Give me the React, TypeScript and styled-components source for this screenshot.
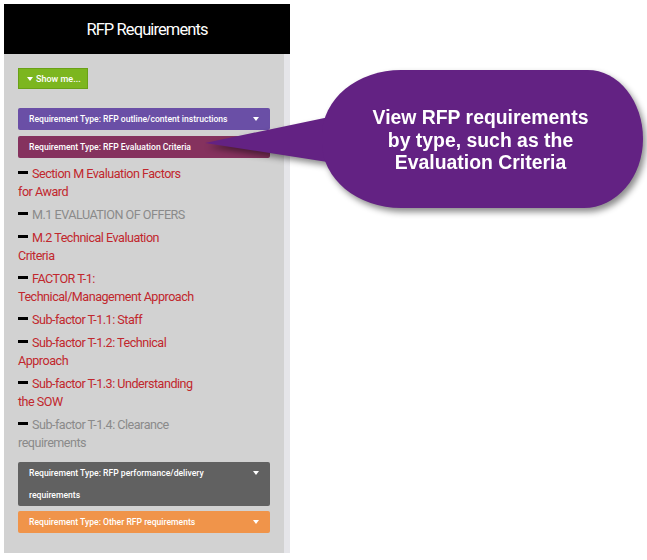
import React from "react";
import styled, { createGlobalStyle } from "styled-components";

const Global = createGlobalStyle`
  html, body { margin: 0; padding: 0; background: #ffffff; }
  body { font-family: Roboto, "Liberation Sans", sans-serif; }
`;

const Page = styled.div`
  position: relative;
  width: 647px;
  height: 560px;
  padding: 4px 0 0 4px;
  box-sizing: border-box;
  overflow: hidden;
`;

const Panel = styled.div`
  width: 286px;
  height: 549px;
  display: flex;
  flex-direction: column;
`;

const Header = styled.div`
  height: 50px;
  background: #000000;
  color: #ffffff;
  display: flex;
  align-items: center;
  justify-content: center;
  font-family: Roboto, sans-serif;
  font-size: 16.5px;
  letter-spacing: -0.9px;
`;

const Body = styled.div`
  flex: 1;
  display: flex;
`;

const Content = styled.div`
  flex: 1;
  background: #d2d2d2;
  padding: 14px 14px 0 14px;
  display: flex;
  flex-direction: column;
  align-items: flex-start;
`;

const Strip = styled.div`
  width: 6px;
  background: #e5e5e9;
`;

const ShowButton = styled.div`
  box-sizing: border-box;
  width: 70px;
  height: 21px;
  background: #7cb61f;
  border: 1px solid #6aa117;
  color: #ffffff;
  font-size: 9px;
  font-weight: 500;
  display: flex;
  align-items: center;
  padding-left: 8px;
  gap: 3px;
  margin-bottom: 19px;
`;

const Caret = styled.span`
  display: inline-block;
  width: 0;
  height: 0;
  border-left: 3px solid transparent;
  border-right: 3px solid transparent;
  border-top: 4px solid #ffffff;
`;

const TypeBar = styled.div<{ $bg: string; $gap?: number }>`
  box-sizing: border-box;
  width: 252px;
  background: ${(p) => p.$bg};
  border-radius: 2px;
  color: #ffffff;
  font-size: 8.6px;
  font-weight: 500;
  line-height: 22px;
  display: flex;
  align-items: flex-start;
  justify-content: space-between;
  padding: 0 11px 0 11px;
  margin-top: ${(p) => p.$gap ?? 0}px;
`;

const BarText = styled.span`
  max-width: 200px;
`;

const BarCaret = styled(Caret)`
  margin-top: 9px;
  flex: none;
`;

const Items = styled.div`
  display: flex;
  flex-direction: column;
  gap: 5px;
  margin: 7px 0 10px 0;
  width: 177px;
`;

const Item = styled.div<{ $muted?: boolean }>`
  font-size: 12.6px;
  line-height: 18px;
  letter-spacing: -0.5px;
  color: ${(p) => (p.$muted ? "#8a8a8a" : "#c1272d")};
`;

const Dash = styled.span`
  display: inline-block;
  width: 10px;
  height: 3px;
  background: #000000;
  vertical-align: 4px;
  margin-right: 4px;
`;

const Callout = styled.div`
  position: absolute;
  left: 204px;
  top: 70px;
  width: 440px;
  height: 140px;
  filter: drop-shadow(3px 4px 3px rgba(0, 0, 0, 0.45));
`;

const Tail = styled.svg`
  position: absolute;
  left: 0;
  top: 0;
`;

const Bubble = styled.div`
  position: absolute;
  left: 118px;
  top: 0;
  width: 321px;
  height: 138px;
  background: #632283;
  border-radius: 80px 56px 60px 80px / 66px 70px 70px 66px;
  display: flex;
  align-items: center;
  justify-content: center;
  text-align: center;
  color: #ffffff;
  font-family: "Liberation Sans", Arial, sans-serif;
  font-weight: bold;
  font-size: 19.4px;
  line-height: 22.5px;
`;

const BubbleText = styled.div`
  margin-top: 2px;
  margin-left: -4px;
`;

const items: { text: string; muted?: boolean }[] = [
  { text: "Section M Evaluation Factors for Award" },
  { text: "M.1 EVALUATION OF OFFERS", muted: true },
  { text: "M.2 Technical Evaluation Criteria" },
  { text: "FACTOR T-1: Technical/Management Approach" },
  { text: "Sub-factor T-1.1: Staff" },
  { text: "Sub-factor T-1.2: Technical Approach" },
  { text: "Sub-factor T-1.3: Understanding the SOW" },
  { text: "Sub-factor T-1.4: Clearance requirements", muted: true },
];

export default function App() {
  return (
    <Page>
      <Global />
      <Panel>
        <Header>RFP Requirements</Header>
        <Body>
          <Content>
            <ShowButton>
              <Caret />
              Show me...
            </ShowButton>
            <TypeBar $bg="#6a4fa6">
              <BarText>Requirement Type: RFP outline/content instructions</BarText>
              <BarCaret />
            </TypeBar>
            <TypeBar $bg="#85325e" $gap={6}>
              <BarText>Requirement Type: RFP Evaluation Criteria</BarText>
            </TypeBar>
            <Items>
              {items.map((it) => (
                <Item key={it.text} $muted={it.muted}>
                  <Dash />
                  {it.text}
                </Item>
              ))}
            </Items>
            <TypeBar $bg="#616161">
              <BarText>Requirement Type: RFP performance/delivery requirements</BarText>
              <BarCaret />
            </TypeBar>
            <TypeBar $bg="#f0944a" $gap={5}>
              <BarText>Requirement Type: Other RFP requirements</BarText>
              <BarCaret />
            </TypeBar>
          </Content>
          <Strip />
        </Body>
      </Panel>
      <Callout>
        <Tail width="140" height="140" viewBox="0 0 140 140">
          <polygon points="1,73 130,46 130,93" fill="#632283" />
        </Tail>
        <Bubble>
          <BubbleText>
            View RFP requirements
            <br />
            by type, such as the
            <br />
            Evaluation Criteria
          </BubbleText>
        </Bubble>
      </Callout>
    </Page>
  );
}
